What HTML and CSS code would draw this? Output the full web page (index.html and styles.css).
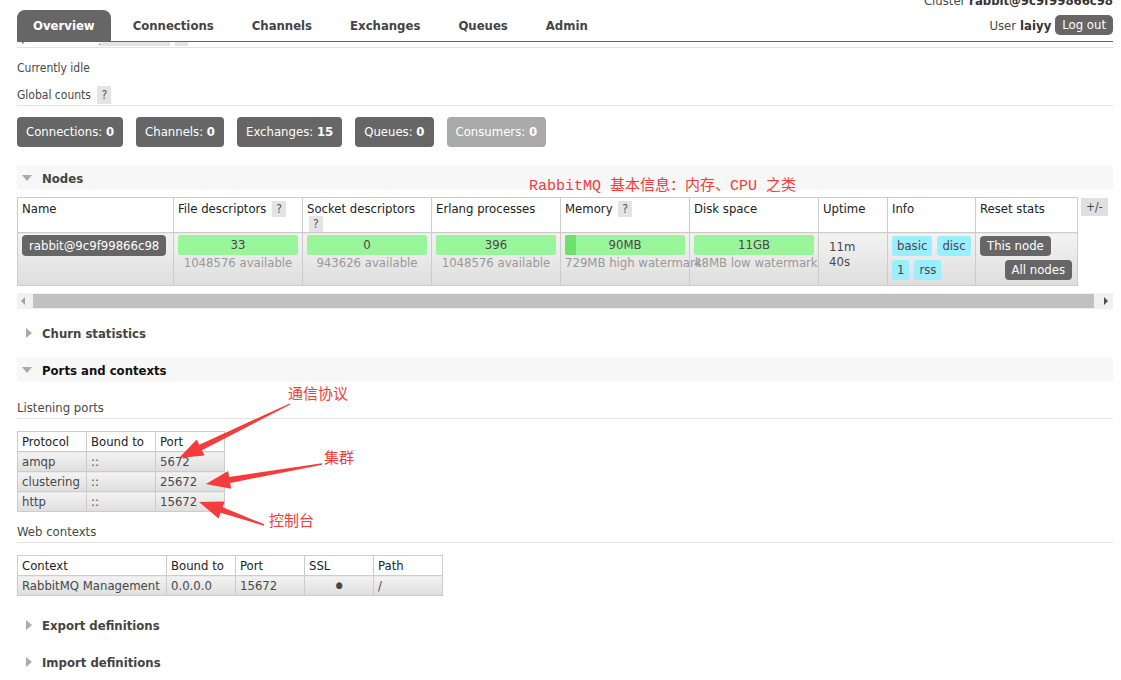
FILE: index.html
```html
<!DOCTYPE html>
<html>
<head>
<meta charset="utf-8">
<title>RabbitMQ Management</title>
<link rel="stylesheet" href="styles.css">
</head>
<body>
<div class="page">
  <div class="header">
    <ul class="tabs">
      <li class="active">Overview</li>
      <li>Connections</li>
      <li>Channels</li>
      <li>Exchanges</li>
      <li>Queues</li>
      <li>Admin</li>
    </ul>
    <div class="login">
      <p class="cluster">Cluster <b>rabbit@9c9f99866c98</b></p>
      <p class="user">User <b>laiyy</b> <span class="logout">Log out</span></p>
    </div>
  </div>
  <div class="clipped">
    <span class="frag">Queued messages</span>
    <span class="gb gb1"></span>
    <span class="gb gb2"></span>
  </div>

  <div class="main">
    <p class="status">Currently idle</p>
    <h3 class="sub gc">Global counts <span class="help">?</span></h3>
    <div class="counts">
      <span class="count">Connections: <b>0</b></span>
      <span class="count">Channels: <b>0</b></span>
      <span class="count">Exchanges: <b>15</b></span>
      <span class="count">Queues: <b>0</b></span>
      <span class="count dim">Consumers: <b>0</b></span>
    </div>

    <div class="section open nodes-sec">
      <h2 class="sec-h"><span class="tri-down"></span>Nodes</h2>
      <div class="nodes-wrap">
        <table class="list nodes">
          <colgroup>
            <col class="c-name"><col class="c-w"><col class="c-w"><col class="c-w"><col class="c-w"><col class="c-w"><col class="c-up"><col class="c-info"><col class="c-reset">
          </colgroup>
          <thead>
            <tr>
              <th>Name</th>
              <th>File descriptors <span class="help">?</span></th>
              <th>Socket descriptors <span class="help">?</span></th>
              <th>Erlang processes</th>
              <th>Memory <span class="help">?</span></th>
              <th>Disk space</th>
              <th>Uptime</th>
              <th>Info</th>
              <th>Reset stats</th>
            </tr>
          </thead>
          <tbody>
            <tr>
              <td><span class="node-pill">rabbit@9c9f99866c98</span></td>
              <td class="stat"><div class="bar"><span class="bar-t">33</span></div><div class="sub-t">1048576 available</div></td>
              <td class="stat"><div class="bar"><span class="bar-t">0</span></div><div class="sub-t">943626 available</div></td>
              <td class="stat"><div class="bar"><span class="bar-t">396</span></div><div class="sub-t">1048576 available</div></td>
              <td class="stat"><div class="bar"><span class="mem-used"></span><span class="bar-t">90MB</span></div><div class="sub-t">729MB high watermark</div></td>
              <td class="stat"><div class="bar"><span class="bar-t">11GB</span></div><div class="sub-t">48MB low watermark</div></td>
              <td class="uptime">11m<br>40s</td>
              <td class="info"><div class="tags"><span class="tag">basic</span><span class="tag">disc</span><span class="tag">1</span><span class="tag">rss</span></div></td>
              <td class="reset"><div class="rbtns"><span class="rbtn">This node</span><span class="rbtn right">All nodes</span></div></td>
            </tr>
          </tbody>
        </table>
        <span class="plusminus">+/-</span>
      </div>
      <div class="scrollbar">
        <span class="arr-l"></span>
        <span class="thumb"></span>
        <span class="arr-r"></span>
      </div>
    </div>

    <div class="section closed churn-sec">
      <h2 class="sec-h"><span class="tri-right"></span>Churn statistics</h2>
    </div>

    <div class="section open ports-sec">
      <h2 class="sec-h"><span class="tri-down"></span>Ports and contexts</h2>
      <h3 class="sub lp">Listening ports</h3>
      <table class="list ports">
        <colgroup><col class="c69"><col class="c69"><col class="c69"></colgroup>
        <thead><tr><th>Protocol</th><th>Bound to</th><th>Port</th></tr></thead>
        <tbody>
          <tr><td>amqp</td><td>::</td><td>5672</td></tr>
          <tr><td>clustering</td><td>::</td><td>25672</td></tr>
          <tr><td>http</td><td>::</td><td>15672</td></tr>
        </tbody>
      </table>
      <h3 class="sub wc">Web contexts</h3>
      <table class="list ports web">
        <colgroup><col class="c149"><col class="c69"><col class="c69"><col class="c69"><col class="c69"></colgroup>
        <thead><tr><th>Context</th><th>Bound to</th><th>Port</th><th>SSL</th><th>Path</th></tr></thead>
        <tbody>
          <tr><td>RabbitMQ Management</td><td>0.0.0.0</td><td>15672</td><td class="ctr">&#9679;</td><td>/</td></tr>
        </tbody>
      </table>
    </div>

    <div class="section closed export-sec">
      <h2 class="sec-h"><span class="tri-right"></span>Export definitions</h2>
    </div>
    <div class="section closed import-sec">
      <h2 class="sec-h"><span class="tri-right"></span>Import definitions</h2>
    </div>
  </div>

  <div class="note note-main">RabbitMQ 基本信息：内存、CPU 之类</div>
  <div class="note note-1">通信协议</div>
  <div class="note note-2">集群</div>
  <div class="note note-3">控制台</div>
  <svg class="arrows" width="1121" height="680" viewBox="0 0 1121 680">
    <polygon points="290.3,404.6 201.9,450.2 204.5,455.6 179,458 196.7,439.4 199.3,444.8 289.7,403.4"/>
    <polygon points="322.1,464.7 230.2,482.9 231.2,488.8 206,484 228.1,471.1 229.1,477.0 321.9,463.3"/>
    <polygon points="264.2,524.3 222.6,507.2 224.6,501.5 199,502 218.6,518.5 220.6,512.8 263.8,525.7"/>
  </svg>
</div>
</body>
</html>
```

FILE: styles.css
```css
html, body {
  margin: 0;
  padding: 0;
  background: #fff;
}

.page {
  position: relative;
  width: 1121px;
  height: 680px;
  overflow: hidden;
  font-family: "DejaVu Sans Condensed", "DejaVu Sans", sans-serif;
  font-size: 12px;
  color: #484848;
}

/* ---------- header ---------- */
.header {
  display: flex;
  justify-content: space-between;
  align-items: flex-end;
  height: 42px;
  box-sizing: border-box;
  margin: 0 8px 0 17px;
  border-bottom: 1px solid #666;
}

.tabs {
  display: flex;
  margin: 0;
  padding: 0;
  list-style: none;
}

.tabs li {
  height: 31px;
  line-height: 31px;
  padding: 0 16px;
  margin-right: 6px;
  font-weight: bold;
  font-size: 13px;
  color: #444;
  border-radius: 8px 8px 0 0;
}

.tabs li.active {
  background: #666;
  color: #fff;
}

.login {
  display: flex;
  flex-direction: column;
  align-items: flex-end;
  align-self: stretch;
  font-size: 13px;
}

.login p {
  margin: 0;
}

.cluster {
  margin-top: -6px !important;
  line-height: 14px;
}

.user {
  margin-top: 7px !important;
  display: flex;
  align-items: center;
  gap: 4px;
}

.login b {
  color: #333;
}

.logout {
  display: inline-block;
  height: 20px;
  line-height: 20px;
  padding: 0 7px;
  background: #666;
  color: #fff;
  border-radius: 5px;
}

/* clipped strip under header */
.clipped {
  height: 5px;
  overflow: hidden;
  margin: 0 8px 0 17px;
  border-bottom: 1px solid #e2e2e2;
  display: flex;
  align-items: flex-start;
}

.frag {
  margin-top: -11px;
  width: 83px;
  white-space: nowrap;
  font-size: 12px;
  line-height: 14px;
}

.gb {
  display: block;
  height: 4px;
  background: #e4e4e4;
}

.gb1 {
  width: 70px;
}

.gb2 {
  width: 13px;
  margin-left: 5px;
}

/* ---------- main ---------- */
.main {
  margin: 0 8px 0 17px;
}

.status {
  margin: 11px 0 0;
  line-height: 18px;
  font-size: 12px;
}

h3.sub {
  margin: 9px 0 0;
  font-size: 13px;
  font-weight: normal;
  line-height: 18px;
  height: 19px;
  border-bottom: 1px solid #e2e2e2;
}

h3.sub.gc {
  font-size: 12px;
}

.help {
  display: inline-block;
  padding: 0 4px;
  line-height: 18px;
  background: #e4e4e4;
  color: #555;
  font-weight: normal;
  font-size: 12px;
  margin-left: 3px;
}

/* counts */
.counts {
  display: flex;
  gap: 13px;
  margin-top: 11px;
}

.count {
  display: inline-block;
  height: 30px;
  line-height: 30px;
  padding: 0 9px;
  background: #666;
  color: #fff;
  border-radius: 4px;
  font-size: 13px;
}

.count.dim {
  background: #aaa;
}

/* sections */
.section {
  margin-top: 13px;
}

.nodes-sec {
  margin-top: 19px;
}

.sec-h {
  display: flex;
  align-items: center;
  height: 24px;
  margin: 0;
  font-size: 13px;
  font-weight: bold;
  color: #444;
}

.section.open .sec-h {
  background: #f7f7f7;
}

.ports-sec .sec-h {
  color: #111;
}

.tri-down {
  width: 0;
  height: 0;
  border-left: 5px solid transparent;
  border-right: 5px solid transparent;
  border-top: 6px solid #aaa;
  margin: 0 10px 0 5px;
}

.tri-right {
  width: 0;
  height: 0;
  border-top: 5px solid transparent;
  border-bottom: 5px solid transparent;
  border-left: 6px solid #aaa;
  margin: 0 10px 0 9px;
}

/* tables */
table.list {
  border-collapse: collapse;
  table-layout: fixed;
  font-size: 13px;
}

table.list th,
table.list td {
  border: 1px solid #ccc;
  text-align: left;
  font-weight: normal;
  vertical-align: top;
}

table.list th {
  background: #fff;
  color: #222;
}

table.list tbody td {
  background: linear-gradient(#f3f3f3, #dedede);
}

.nodes-wrap {
  display: flex;
  align-items: flex-start;
  margin-top: 7px;
}

.nodes {
  width: 1060px;
}

.c-name { width: 156px; }
.c-w { width: 129px; }
.c-up { width: 69px; }
.c-info { width: 88px; }
.c-reset { width: 102px; }

.nodes th {
  height: 34px;
  box-sizing: border-box;
  padding: 3px 4px 0 4px;
  line-height: 15px;
}

.nodes th .help {
  line-height: 16px;
  margin-left: 2px;
}

.nodes td {
  height: 53px;
  box-sizing: border-box;
  padding: 2px 4px 3px 4px;
}

.node-pill {
  display: inline-block;
  height: 21px;
  line-height: 21px;
  padding: 0 7px;
  background: #666;
  color: #fff;
  border-radius: 4px;
  font-size: 13px;
  white-space: nowrap;
}

table.list td.stat {
  text-align: center;
  white-space: nowrap;
}

.bar {
  position: relative;
  height: 20px;
  line-height: 20px;
  background: #99f599;
  border-radius: 2px;
  color: #484848;
  font-size: 13px;
}

.bar-t {
  position: relative;
}

.mem-used {
  position: absolute;
  left: 0;
  top: 0;
  width: 11px;
  height: 20px;
  background: #6be36b;
  border-radius: 2px 0 0 2px;
}

.sub-t {
  color: #999;
  font-size: 13px;
  line-height: 16px;
}

table.list td.uptime {
  padding-left: 10px;
  padding-top: 6px;
  line-height: 15px;
}

.tags {
  display: flex;
  flex-wrap: wrap;
  gap: 4px 5px;
  margin-top: 1px;
}

.tag {
  display: block;
  height: 20px;
  line-height: 20px;
  padding: 0 5px;
  background: #99eeff;
  color: #484848;
  border-radius: 3px;
  font-size: 13px;
}

.rbtns {
  display: flex;
  flex-direction: column;
  align-items: flex-start;
  margin-top: 1px;
}

.rbtn {
  display: block;
  height: 20px;
  line-height: 20px;
  padding: 0 7px;
  background: #666;
  color: #fff;
  border-radius: 4px;
  font-size: 13px;
}

.rbtn.right {
  align-self: flex-end;
  margin-top: 4px;
  margin-right: 1px;
}

.plusminus {
  display: inline-block;
  margin: 1px 0 0 3px;
  padding: 0 5px;
  height: 18px;
  line-height: 18px;
  background: #e0e0e0;
  color: #444;
  font-size: 12px;
}

/* horizontal scrollbar */
.scrollbar {
  display: flex;
  align-items: center;
  height: 16px;
  margin-top: 7px;
  background: #f1f1f1;
}

.arr-l {
  width: 0;
  height: 0;
  border-top: 4px solid transparent;
  border-bottom: 4px solid transparent;
  border-right: 4px solid #a3a3a3;
  margin: 0 8px 0 4px;
}

.thumb {
  flex: 1;
  height: 14px;
  background: #c1c1c1;
}

.arr-r {
  width: 0;
  height: 0;
  border-top: 4px solid transparent;
  border-bottom: 4px solid transparent;
  border-left: 4px solid #505050;
  margin: 0 5px 0 10px;
}

.churn-sec {
  margin-top: 12px;
}

.sub.lp {
  margin-top: 17px;
}

.ports {
  margin-top: 12px;
}

.c69 { width: 69px; }
.c149 { width: 149px; }

.ports th,
.ports td {
  height: 20px;
  box-sizing: border-box;
  padding: 1px 4px 0 4px;
  line-height: 17px;
  white-space: nowrap;
}

table.list td.ctr {
  text-align: center;
  font-size: 9px;
}

.sub.wc {
  margin-top: 11px;
}

.web {
  margin-top: 12px;
}

.export-sec {
  margin-top: 17px;
}

/* annotations (overlay) */
.note {
  position: absolute;
  color: #f53b3b;
  font-family: "Liberation Mono", "Noto Sans CJK SC", monospace;
  font-size: 15px;
  line-height: 18px;
  white-space: nowrap;
}

.note-main { left: 529px; top: 178px; }
.note-1 { left: 288px; top: 387px; }
.note-2 { left: 324px; top: 451px; }
.note-3 { left: 269px; top: 514px; }

.arrows {
  position: absolute;
  left: 0;
  top: 0;
  pointer-events: none;
}

.arrows polygon {
  fill: #f53b3b;
}
```
